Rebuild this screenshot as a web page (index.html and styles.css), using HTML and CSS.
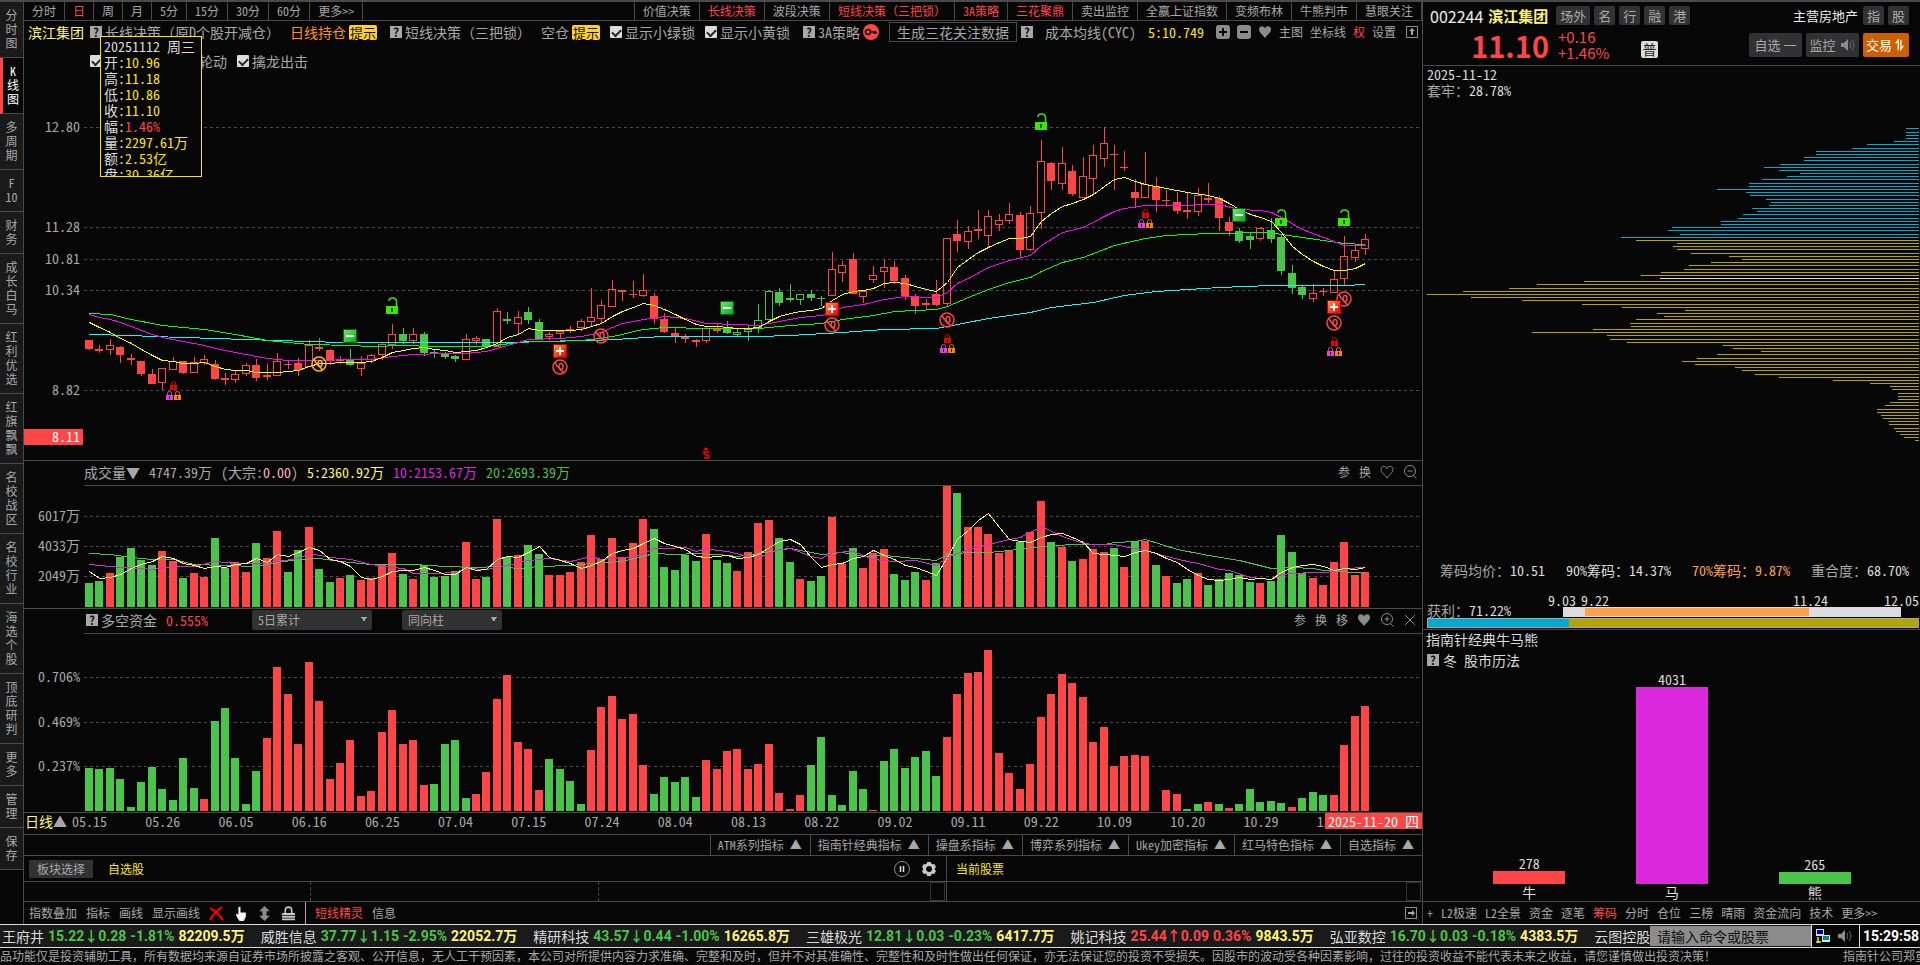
FILE: index.html
```html
<!DOCTYPE html>
<html lang="zh-CN">
<head>
    <meta charset="UTF-8">
    <meta name="viewport" content="width=device-width, initial-scale=1.0">
    <title>滨江集团 002244</title>
    <link rel="stylesheet" href="styles.css">
</head>
<body>
    <!-- Shared icons -->
    <svg class="sprite" aria-hidden="true">
        <symbol id="heart" viewBox="0 0 14 14"><path d="M7 13 C5 10 1 7.500 1 4.500 C1 0.500 6 0.500 7 3.500 C8 0.500 13 0.500 13 4.500 C13 7.500 9 10 7 13Z"/></symbol>
        <symbol id="zoom-out" viewBox="0 0 14 14"><g fill="none" stroke="currentColor"><circle cx="7" cy="6" r="5.500"/><path d="M4.500 6h5M10.500 10.500l3 3"/></g></symbol>
        <symbol id="zoom-in" viewBox="0 0 14 14"><g fill="none" stroke="currentColor"><circle cx="7" cy="6" r="5.500"/><path d="M4.500 6h5M7 3.500v5M10.500 10.500l3 3"/></g></symbol>
        <symbol id="cross" viewBox="0 0 14 14"><path d="M2 2l10 10M12 2L2 12" fill="none" stroke="currentColor"/></symbol>
        <symbol id="plus-box" viewBox="0 0 14 14"><rect width="14" height="14" rx="3" fill="#8c8c8c"/><path d="M7 3v8M3 7h8" stroke="#000" stroke-width="2"/></symbol>
        <symbol id="minus-box" viewBox="0 0 14 14"><rect width="14" height="14" rx="3" fill="#8c8c8c"/><path d="M3 7h8" stroke="#000" stroke-width="2"/></symbol>
        <symbol id="arrow-box" viewBox="0 0 12 12"><rect x=".5" y=".5" width="11" height="11" fill="none" stroke="#8c8c8c"/><path d="M6 2L3 5h2v4h2V5h2z" fill="#a8a8a8"/></symbol>
        <symbol id="arrow-box-right" viewBox="0 0 12 12"><rect x=".5" y=".5" width="11" height="11" fill="none" stroke="#8c8c8c"/><path d="M10 6L7 3v2H3v2h4v2z" fill="#a8a8a8"/></symbol>
        <symbol id="speaker" viewBox="0 0 16 14"><path d="M1 5h3l4-4v12L4 9H1z" fill="#8c8c8c"/><path d="M10 4q2 3 0 6M12 2q4 5 0 10" fill="none" stroke="#6a6a6a" stroke-width="1"/></symbol>
    </svg>

    <div class="app">
        <div class="workspace">
            <nav class="sidebar">
                <a href="#">分<br>时<br>图</a>
                <a href="#" class="active">K<br>线<br>图</a>
                <a href="#">多<br>周<br>期</a>
                <a href="#">F<br>10</a>
                <a href="#">财<br>务</a>
                <a href="#">成<br>长<br>白<br>马</a>
                <a href="#">红<br>利<br>优<br>选</a>
                <a href="#">红<br>旗<br>飘<br>飘</a>
                <a href="#">名<br>校<br>战<br>区</a>
                <a href="#">名<br>校<br>行<br>业</a>
                <a href="#">海<br>选<br>个<br>股</a>
                <a href="#">顶<br>底<br>研<br>判</a>
                <a href="#">更<br>多</a>
                <a href="#">管<br>理</a>
                <a href="#">保<br>存</a>
            </nav>

            <main class="main">
                <nav class="tabs">
                    <a href="#">分时</a>
                    <a href="#" class="red">日</a>
                    <a href="#">周</a>
                    <a href="#">月</a>
                    <a href="#">5分</a>
                    <a href="#">15分</a>
                    <a href="#">30分</a>
                    <a href="#">60分</a>
                    <a href="#">更多&gt;&gt;</a>
                    <span class="tabs-space"></span>
                    <a href="#">价值决策</a>
                    <a href="#" class="red">长线决策</a>
                    <a href="#">波段决策</a>
                    <a href="#" class="red full">短线决策（三把锁）</a>
                    <a href="#" class="red">3A策略</a>
                    <a href="#" class="red">三花聚鼎</a>
                    <a href="#">卖出监控</a>
                    <a href="#">全赢上证指数</a>
                    <a href="#">变频布林</a>
                    <a href="#">牛熊判市</a>
                    <a href="#">慧眼关注</a>
                </nav>

                <!-- Strategy bar -->
                <section class="info">
                    <div class="info-row">
                        <span class="name">滨江集团</span>
                        <span class="item"><b class="help">?</b><span class="full">长线决策（原<i class="half">D</i>个股开减仓）</span></span>
                        <span class="item orange">日线持仓<mark>提示</mark></span>
                        <span class="item wide full"><b class="help">?</b>短线决策（三把锁）</span>
                        <span class="item">空仓<mark>提示</mark></span>
                        <label class="item"><input type="checkbox" checked>显示小绿锁</label>
                        <label class="item"><input type="checkbox" checked>显示小黄锁</label>
                        <span class="item wide"><b class="help">?</b>3A策略<svg class="key" viewBox="0 0 16 16"><circle cx="8" cy="8" r="8" fill="#ff4646"/><circle cx="5" cy="8" r="2.500" fill="none" stroke="#111" stroke-width="1.500"/><path d="M7.500 8h6M11 8v2M13 8v2" fill="none" stroke="#111" stroke-width="1.500"/></svg></span>
                        <button type="button" class="generate">生成三花关注数据</button>
                        <span class="item cost"><b class="help">?</b><span>成本均线(CYC)</span><span class="bright">5:10.749</span></span>
                        <span class="tools">
                            <svg><use href="#plus-box"/></svg>
                            <svg><use href="#minus-box"/></svg>
                            <svg class="solid"><use href="#heart"/></svg>
                            <a href="#">主图</a>
                            <a href="#">坐标线</a>
                            <a href="#" class="red">权</a>
                            <a href="#">设置</a>
                            <svg class="small"><use href="#arrow-box"/></svg>
                        </span>
                    </div>
                    <div class="info-row second">
                        <label class="item rotation"><input type="checkbox" checked><span>板块轮动</span></label>
                        <label class="item"><input type="checkbox" checked>擒龙出击</label>
                    </div>
                    <div class="tooltip">
                        <p>20251112 周三</p>
                        <p>开:<span class="bright">10.96</span></p>
                        <p>高:<span class="bright">11.18</span></p>
                        <p>低:<span class="bright">10.86</span></p>
                        <p>收:<span class="bright">11.10</span></p>
                        <p>幅:<span class="red">1.46%</span></p>
                        <p>量:<span class="bright">2297.61万</span></p>
                        <p>额:<span class="bright">2.53亿</span></p>
                        <p>盘:<span class="bright">30.36亿</span></p>
                    </div>
                </section>

                <section class="plot price">
                    <svg class="axis" id="priceAxis"></svg>
                    <svg id="pricePlot" viewBox="0 0 1338 384" preserveAspectRatio="none"></svg>
                </section>

                <header class="pane-head">
                    <div class="pane-title">
                        <span>成交量▼</span>
                        <span>4747.39万</span>
                        <span>(大宗:<i class="pink">0.00</i>)</span>
                        <span class="yellow">5:2360.92万</span>
                        <span class="magenta">10:2153.67万</span>
                        <span class="green">20:2693.39万</span>
                        <span class="tools">
                            <a href="#">参</a>
                            <a href="#">换</a>
                            <svg class="hollow"><use href="#heart"/></svg>
                            <svg><use href="#zoom-out"/></svg>
                        </span>
                    </div>
                </header>
                <section class="plot volume">
                    <svg class="axis" id="volumeAxis"></svg>
                    <svg id="volumePlot" viewBox="0 0 1338 122" preserveAspectRatio="none"></svg>
                </section>

                <header class="pane-head">
                    <div class="pane-title">
                        <span class="item"><b class="help">?</b>多空资金</span>
                        <span class="red">0.555%</span>
                        <select class="period" aria-label="周期"><option>5日累计</option></select>
                        <select aria-label="柱形"><option>同向柱</option></select>
                        <span class="tools">
                            <a href="#">参</a>
                            <a href="#">换</a>
                            <a href="#">移</a>
                            <svg class="solid"><use href="#heart"/></svg>
                            <svg><use href="#zoom-in"/></svg>
                            <svg><use href="#cross"/></svg>
                        </span>
                    </div>
                </header>
                <section class="plot fund">
                    <svg class="axis" id="fundAxis"></svg>
                    <svg id="fundPlot" viewBox="0 0 1338 178" preserveAspectRatio="none"></svg>
                </section>

                <div class="dates">
                    <span class="cycle"><b>日线</b>▲</span>
                    <ol>
                        <li>05.15</li><li>05.26</li><li>06.05</li><li>06.16</li><li>06.25</li><li>07.04</li>
                        <li>07.15</li><li>07.24</li><li>08.04</li><li>08.13</li><li>08.22</li><li>09.02</li>
                        <li>09.11</li><li>09.22</li><li>10.09</li><li>10.20</li><li>10.29</li><li>11.07</li>
                    </ol>
                    <span class="today">2025-11-20 四</span>
                </div>

                <nav class="groups">
                    <a href="#">ATM系列指标<i>▲</i></a>
                    <a href="#">指南针经典指标<i>▲</i></a>
                    <a href="#">操盘系指标<i>▲</i></a>
                    <a href="#">博弈系列指标<i>▲</i></a>
                    <a href="#">Ukey加密指标<i>▲</i></a>
                    <a href="#">红马特色指标<i>▲</i></a>
                    <a href="#">自选指标<i>▲</i></a>
                </nav>

                <div class="split picks">
                    <div class="left">
                        <button type="button">板块选择</button>
                        <a href="#" class="bright">自选股</a>
                        <svg class="pause" viewBox="0 0 16 16"><circle cx="8" cy="8" r="7.500" fill="none" stroke="#8c8c8c"/><path d="M6.500 5v6M9.500 5v6" stroke="#ddd" stroke-width="1.500"/></svg>
                        <svg viewBox="0 0 16 16"><circle cx="8" cy="8" r="4.500" fill="none" stroke="#c8c8c8" stroke-width="3"/><path d="M8 1v3M8 12v3M1.900 4.500l2.600 1.500M11.500 10l2.600 1.500M1.900 11.500l2.600-1.500M11.500 6l2.600-1.500" stroke="#c8c8c8" stroke-width="4"/></svg>
                    </div>
                    <div class="right"><a href="#" class="bright">当前股票</a></div>
                </div>
                <div class="split strip">
                    <div class="left"><span></span><span></span><span></span><i></i></div>
                    <div class="right"><i></i></div>
                </div>

                <div class="toolbar">
                    <a href="#">指数叠加</a>
                    <a href="#">指标</a>
                    <a href="#">画线</a>
                    <a href="#">显示画线</a>
                    <svg viewBox="0 0 14 14"><path d="M1 2Q8 6 13 13M12 1Q5 6 1 13" fill="none" stroke="#f00" stroke-width="2"/></svg>
                    <svg viewBox="0 0 14 14"><path d="M5 1h2v5h5v4l-2 4H6L3 9V7l2 1z" fill="#f4f4f4"/></svg>
                    <svg viewBox="0 0 14 14"><path d="M7 0l5 5H9v4h3l-5 5-5-5h3V5H2z" fill="#8c8c8c"/></svg>
                    <svg viewBox="0 0 14 14"><path d="M4 7V4q0-3 3-3t3 3v3" fill="none" stroke="#c8c8c8" stroke-width="1.500"/><path d="M1 7.500h12M1 10h12M1 12.500h12" stroke="#c8c8c8" stroke-width="1.800"/></svg>
                    <span class="bar"></span>
                    <a href="#" class="red">短线精灵</a>
                    <a href="#">信息</a>
                    <svg class="end"><use href="#arrow-box-right"/></svg>
                </div>
            </main>

            <!-- Quote panel -->
            <aside class="quote">
                <header>
                    <div class="quote-row">
                        <span class="code">002244</span>
                        <strong class="stock">滨江集团</strong>
                        <span class="tags"><a href="#">场外</a><a href="#">名</a><a href="#">行</a><a href="#">融</a><a href="#">港</a></span>
                        <span class="sector">主营房地产</span>
                        <span class="tags"><a href="#">指</a><a href="#">股</a></span>
                    </div>
                    <div class="quote-row">
                        <strong class="last">11.10</strong>
                        <span class="change">+0.16<br>+1.46%</span>
                        <span class="badge">普</span>
                        <span class="actions">
                            <button type="button">自选 一</button>
                            <button type="button">监控<svg><use href="#speaker"/></svg></button>
                            <button type="button" class="trade">交易<svg viewBox="0 0 12 14"><path d="M1 5l3-4v12M7 1v11l3-4" fill="none" stroke="#fff" stroke-width="1.500"/></svg></button>
                        </span>
                    </div>
                </header>

                <div class="chips">
                    <p class="white">2025-11-12</p>
                    <p>套牢：<span class="white">28.78%</span></p>
                    <svg id="chipPlot" viewBox="0 0 492 458" preserveAspectRatio="none"></svg>
                </div>
                <div class="stats">
                    <span>筹码均价：<span class="white">10.51</span></span>
                    <span class="white">90%筹码：14.37%</span>
                    <span class="peach">70%筹码：9.87%</span>
                    <span>重合度：<span class="white">68.70%</span></span>
                </div>
                <div class="range">
                    <p>获利：<span class="white">71.22%</span></p>
                    <div class="scale">
                        <div class="ticks"><span>9.03</span><span>9.22</span><span class="high">11.24</span><span>12.05</span></div>
                        <div class="outer"><div class="inner"></div></div>
                    </div>
                </div>
                <div class="profit"><div style="width: 28.78%"></div></div>

                <section class="breadth">
                    <h2>指南针经典牛马熊</h2>
                    <p><b class="help">?</b>冬 股市历法</p>
                    <div class="columns" id="breadth"></div>
                </section>

                <nav class="quote-tabs">
                    <span>+</span>
                    <a href="#">L2极速</a>
                    <a href="#">L2全景</a>
                    <a href="#">资金</a>
                    <a href="#">逐笔</a>
                    <a href="#" class="red">筹码</a>
                    <a href="#">分时</a>
                    <a href="#">仓位</a>
                    <a href="#">三榜</a>
                    <a href="#">晴雨</a>
                    <a href="#">资金流向</a>
                    <a href="#">技术</a>
                    <a href="#">更多&gt;&gt;</a>
                </nav>
            </aside>
        </div>

        <footer class="ticker">
            <div class="quotes" id="ticker"></div>
            <input type="text" placeholder="请输入命令或股票" aria-label="请输入命令或股票">
            <div class="tray">
                <svg viewBox="0 0 16 16"><rect x="1" y="1" width="8" height="7" fill="#ddd"/><rect x="2" y="2" width="6" height="4" fill="#00a"/><rect x="7" y="7" width="8" height="7" fill="#ddd"/><rect x="8" y="8" width="6" height="4" fill="#088"/><path d="M1 14h5M3 9v6" stroke="#ee0" stroke-width="1.500"/></svg>
                <svg><use href="#speaker"/></svg>
            </div>
            <time>15:29:58</time>
        </footer>
        <div class="notice full">
            <p>品功能仅是投资辅助工具，所有数据均来源自证券市场所披露之客观、公开信息，无人工干预因素，本公司对所提供内容力求准确、完整和及时，但并不对其准确性、完整性和及时性做出任何保证，亦无法保证您的投资不受损失。因股市的波动受各种因素影响，过往的投资收益不能代表未来之收益，请您谨慎做出投资决策！</p>
            <p>指南针公司郑重</p>
        </div>
    </div>

    <script src="script.js"></script>
</body>
</html>
```
FILE: styles.css
```css
/* Basic Reset */
* {
    margin: 0;
    padding: 0;
    box-sizing: border-box;
}

body {
    background-color: #070707;
    color: #a8a8a8;
    font-family: "Noto Sans CJK SC", sans-serif;
    font-feature-settings: "hwid";
    font-size: 14px;
    line-height: 16px;
    white-space: nowrap;
}

a {
    color: inherit;
    text-decoration: none;
}

i {
    font-style: normal;
}

button,
select,
input {
    font: inherit;
    font-feature-settings: inherit;
    color: inherit;
    border: none;
}

.sprite {
    display: none;
}

/* Full-width punctuation, half-width letters */
.full {
    font-feature-settings: normal;
}

.half {
    font-feature-settings: "hwid";
}

/* Colours */
.red { color: #ff4646; }
.green { color: #4bc44b; }
.yellow { color: #fff573; }
.bright { color: #ffe600; }
.orange { color: #ff9600; }
.peach { color: #ffa04b; }
.magenta { color: #dc28dc; }
.pink { color: #ffb4c8; }
.white { color: #dcdcdc; }

/* Frame */
.app {
    display: flex;
    flex-direction: column;
    height: 100vh;
    overflow: hidden;
    border-top: 2px solid #4a4a4a;
}

.workspace {
    flex: 1;
    min-height: 0;
    display: grid;
    grid-template-columns: 24px minmax(0, 1fr) 498px;
}

/* Sidebar */
.sidebar {
    border-right: 1px solid #4a4a4a;
    font-size: 12px;
    line-height: 14px;
    text-align: center;
}

.sidebar a {
    display: block;
    padding: 6px 0 7px;
    background-color: #1a1a1a;
    border-bottom: 1px solid #4a4a4a;
}

.sidebar .active {
    background-color: #070707;
    color: #fff;
    border-left: 3px solid #ff4646;
}

/* Main column */
.main {
    display: flex;
    flex-direction: column;
    min-width: 0;
    min-height: 0;
}

.tabs {
    display: flex;
    height: 19px;
    border-bottom: 1px solid #4a4a4a;
    font-size: 12px;
    line-height: 18px;
}

.tabs a {
    padding: 0 8px;
    border-right: 1px solid #4a4a4a;
}

.tabs-space {
    flex: 1;
    border-right: 1px solid #4a4a4a;
}

.info {
    position: relative;
    height: 55px;
}

.info-row {
    display: flex;
    align-items: center;
    gap: 10px;
    height: 22px;
    padding: 0 4px;
}

.info-row.second {
    height: 36px;
    padding-left: 66px;
}

.name {
    color: #fff573;
    margin-right: -4px;
}

.item {
    display: flex;
    align-items: center;
    gap: 3px;
}

.item.wide {
    margin-left: 3px;
}

.item mark {
    padding: 0 1px;
    border-radius: 2px;
    background-color: #ffd21e;
    color: #111;
    font-size: 13px;
    line-height: 15px;
}

.rotation span {
    width: 122px;
    text-align: right;
}

.help {
    width: 12px;
    height: 12px;
    background-color: #a8a8a8;
    color: #111;
    font-size: 12px;
    line-height: 12px;
    text-align: center;
}

input[type="checkbox"] {
    appearance: none;
    width: 12px;
    height: 12px;
    background-color: #dcdcdc;
    border-radius: 1px;
}

input[type="checkbox"]:checked::before {
    content: "";
    display: block;
    width: 7px;
    height: 4px;
    margin: 3px 2px;
    border-left: 2px solid #222;
    border-bottom: 2px solid #222;
    transform: rotate(-45deg);
}

.key {
    width: 16px;
    height: 16px;
}

.generate {
    height: 20px;
    padding: 0 7px;
    background-color: #070707;
    border: 1px solid #4a4a4a;
    line-height: 16px;
}

.cost {
    gap: 12px;
    margin-left: -6px;
}

.tools {
    display: flex;
    align-items: center;
    gap: 9px;
    margin-left: auto;
    font-size: 12px;
}

.info-row .tools {
    gap: 7px;
}

.tools svg {
    width: 14px;
    height: 14px;
    color: #8c8c8c;
}

.tools .small {
    width: 12px;
    height: 12px;
    margin-left: 3px;
}

.solid {
    fill: #8c8c8c;
}

.hollow {
    fill: none;
    stroke: #8c8c8c;
}

/* Day tooltip */
.tooltip {
    position: absolute;
    top: 15px;
    left: 76px;
    z-index: 1;
    width: 102px;
    height: 141px;
    overflow: hidden;
    padding: 1px 3px;
    background-color: #070707;
    border: 1px solid #ffe600;
    color: #dcdcdc;
}

/* Plots */
.plot {
    display: grid;
    grid-template-columns: 60px minmax(0, 1fr);
    min-height: 0;
}

.plot svg {
    display: block;
    width: 100%;
    height: 100%;
    min-height: 0;
}

.price { flex: 384 1 0; }
.volume { flex: 122 1 0; }
.fund { flex: 178 1 0; }

.axis text {
    fill: #a8a8a8;
    text-anchor: end;
}

.axis .current {
    fill: #fff;
}

.grid-line {
    stroke: #4a4a4a;
    stroke-dasharray: 3 3;
}

.curve {
    fill: none;
    stroke-width: 1;
}

.pane-head {
    height: 26px;
    padding-left: 60px;
    border-top: 1px solid #4a4a4a;
}

.pane-title {
    display: flex;
    align-items: center;
    gap: 9px;
    height: 25px;
    padding: 0 5px 2px 0;
    border-bottom: 1px solid #4a4a4a;
}

.pane-title .item {
    padding-left: 2px;
}

select {
    appearance: none;
    width: 100px;
    height: 20px;
    margin-left: 21px;
    padding: 0 6px;
    border-radius: 2px;
    background-color: #323234;
    background-image: linear-gradient(to bottom right, #a8a8a8 50%, transparent 50%), linear-gradient(to bottom left, #a8a8a8 50%, transparent 50%);
    background-size: 3px 5px;
    background-position: right 5px top 7px, right 8px top 7px;
    background-repeat: no-repeat;
    font-size: 12px;
}

select.period {
    width: 120px;
    margin-left: 35px;
}

/* Date axis */
.dates {
    position: relative;
    display: flex;
    align-items: flex-start;
    height: 22px;
    padding-right: 32px;
    border-top: 1px solid #4a4a4a;
}

.cycle {
    width: 48px;
    padding-left: 1px;
}

.cycle b {
    color: #fff573;
    font-weight: normal;
}

.dates ol {
    flex: 1;
    display: flex;
    list-style: none;
}

.dates li {
    flex: 1;
}

.today {
    position: absolute;
    top: 0;
    right: 0;
    padding: 0 3px;
    background-color: #ff4646;
    color: #fff;
}

.groups {
    display: flex;
    justify-content: flex-end;
    height: 21px;
    border-top: 1px solid #4a4a4a;
    font-size: 12px;
    line-height: 20px;
}

.groups a {
    padding: 0 8px 0 7px;
    border-left: 1px solid #4a4a4a;
}

.groups i {
    margin-left: 6px;
}

/* Watch list strips */
.split {
    display: grid;
    grid-template-columns: 923px minmax(0, 1fr);
    border-top: 1px solid #4a4a4a;
    font-size: 12px;
}

.split > div {
    display: flex;
    align-items: center;
}

.split .left {
    border-right: 1px solid #4a4a4a;
}

.picks {
    height: 26px;
}

.picks .left {
    gap: 11px;
    padding: 0 9px 0 5px;
}

.picks .right {
    padding-left: 9px;
}

.picks button {
    height: 18px;
    padding: 0 8px;
    margin-right: 4px;
    background-color: #323234;
    line-height: 18px;
}

.picks svg {
    width: 16px;
    height: 16px;
}

.pause {
    margin-left: auto;
}

.strip {
    height: 20px;
}

.strip > div {
    align-items: stretch;
}

.strip span {
    flex: 287;
    border-right: 1px dashed #4a4a4a;
}

.strip span:nth-child(3) {
    flex: 332;
    border-right: none;
}

.strip i {
    width: 15px;
    margin: 0 1px 0 auto;
    border: 1px solid #333;
}

.toolbar {
    display: flex;
    align-items: center;
    gap: 9px;
    height: 23px;
    padding: 0 5px;
    border-top: 1px solid #4a4a4a;
    font-size: 12px;
}

.toolbar svg {
    width: 15px;
    height: 15px;
}

.toolbar .bar {
    align-self: stretch;
    width: 1px;
    background-color: #a8a8a8;
}

.toolbar .end {
    width: 12px;
    height: 12px;
    margin-left: auto;
}

/* Quote panel */
.quote {
    display: flex;
    flex-direction: column;
    min-height: 0;
    border-left: 1px solid #4a4a4a;
}

.quote header {
    height: 64px;
    border-bottom: 1px solid #4a4a4a;
    font-feature-settings: normal;
}

.quote-row {
    display: flex;
    align-items: center;
    height: 27px;
    padding: 0 11px 0 7px;
}

.quote-row + .quote-row {
    height: 32px;
}

.code {
    color: #eee;
    font-size: 16px;
}

.stock {
    margin: 0 8px 0 5px;
    color: #fff573;
    font-size: 15px;
}

.tags {
    display: flex;
    gap: 4px;
    font-size: 13px;
    line-height: 19px;
}

.tags a {
    padding: 0 4px;
    border-radius: 2px;
    background-color: #323234;
}

.sector {
    margin: 0 5px 0 auto;
    color: #eee;
    font-size: 13px;
}

.last {
    width: 119px;
    color: #ff4646;
    font-size: 29px;
    line-height: 32px;
    text-align: right;
}

.change {
    width: 83px;
    margin-left: 9px;
    color: #ff4646;
    font-size: 15px;
}

.badge {
    width: 17px;
    margin-top: 8px;
    border-radius: 2px;
    background-color: #dcdcdc;
    color: #321e14;
    line-height: 17px;
    text-align: center;
}

.actions {
    display: flex;
    gap: 4px;
    margin-left: auto;
}

.actions button {
    display: flex;
    align-items: center;
    justify-content: center;
    gap: 4px;
    width: 53px;
    height: 24px;
    border-radius: 2px;
    background-color: #323234;
    font-size: 13px;
}

.actions svg {
    width: 16px;
    height: 14px;
}

.actions .trade {
    gap: 2px;
    width: 46px;
    background-color: #cd5f00;
    color: #fff;
}

.actions .trade svg {
    width: 12px;
    height: 12px;
}

.chips {
    flex: 1;
    min-height: 0;
    display: flex;
    flex-direction: column;
    padding: 0 1px 0 4px;
}

.chips svg {
    flex: 1;
    min-height: 0;
    width: 100%;
}

.stats {
    display: flex;
    justify-content: space-between;
    padding: 6px 11px 8px 17px;
}

.range {
    display: flex;
    align-items: flex-end;
    height: 32px;
    padding: 0 1px 0 4px;
}

.scale {
    flex: 1;
    margin-left: 37px;
    padding-bottom: 1px;
}

.ticks {
    display: flex;
    gap: 5px;
    color: #dcdcdc;
    line-height: 14px;
}

.ticks .high {
    margin: 0 51px 0 auto;
}

.outer {
    margin: 0 18px 0 15px;
    padding: 1px 92px 1px 22px;
    background-color: #dcdce0;
}

.inner {
    height: 8px;
    background-color: #ffa04b;
}

.profit {
    height: 10px;
    margin: 0 1px 1px 4px;
    border: 1px solid #a8a8a8;
    background-color: #b4a500;
}

.profit div {
    height: 100%;
    background-color: #00aad2;
}

/* Market breadth */
.breadth {
    height: 272px;
    padding: 0 4px 0 3px;
    border-top: 1px solid #4a4a4a;
    color: #dcdcdc;
}

.breadth h2 {
    font-size: 14px;
    font-weight: normal;
    line-height: 18px;
}

.breadth > p {
    display: flex;
    align-items: center;
    gap: 4px;
    height: 23px;
    padding-left: 1px;
}

.columns {
    display: grid;
    grid-template-columns: repeat(3, 1fr);
    align-items: end;
    padding: 0 30px 0 32px;
    line-height: 16px;
    text-align: center;
}

.columns .block {
    width: 72px;
    margin: 0 auto;
}

.quote-tabs {
    display: flex;
    align-items: center;
    gap: 8px;
    height: 23px;
    padding-left: 4px;
    border-top: 1px solid #4a4a4a;
    font-size: 12px;
}

/* Ticker */
.ticker {
    display: flex;
    align-items: center;
    height: 23px;
    border-top: 1px solid #dcdcdc;
    background-color: #1a1a1a;
}

.quotes {
    flex: 1;
    min-width: 0;
    display: flex;
    gap: 16px;
    padding-left: 2px;
    overflow: hidden;
    line-height: 22px;
}

.quotes span {
    display: flex;
    gap: 4px;
    color: #dcdcdc;
}

.quotes b {
    font-family: Roboto, "Noto Sans CJK SC", sans-serif;
    font-feature-settings: normal;
}

.quotes .turnover {
    color: #fff573;
}

.ticker input {
    width: 161px;
    height: 20px;
    padding: 0 7px;
    background-color: #8c8c8c;
}

.ticker input::placeholder {
    color: #111;
    opacity: 1;
}

.tray,
.ticker time {
    display: flex;
    align-items: center;
    align-self: stretch;
    background-color: #070707;
    border-left: 1px solid #dcdcdc;
}

.tray {
    gap: 6px;
    width: 48px;
    padding: 0 3px;
}

.tray svg {
    width: 16px;
    height: 16px;
}

.ticker time {
    width: 61px;
    padding-left: 3px;
    color: #fff;
    font-family: Roboto, sans-serif;
    font-weight: bold;
}

.notice {
    display: flex;
    justify-content: space-between;
    height: 18px;
    overflow: hidden;
    border-top: 1px solid #dcdcdc;
    font-size: 12px;
}

.notice p:last-child {
    width: 77px;
    overflow: hidden;
}
```
FILE: script.js
```js
const RED = '#ff4646';
const GREEN = '#4bc44b';
const STEP = 1276 / 122;
const centre = i => Math.round(5 + i * STEP);

// [body top, body bottom, high, low, kind] - R/g solid, r/G hollow
const candles = `264,273,264,274,R 273,275,269,277,R 269,274,263,279,r 271,279,270,287,R 282,284,278,289,R
285,298,285,300,R 298,308,293,308,R 292,307,292,314,r 285,294,281,294,r 285,297,285,298,R
286,297,281,297,r 283,287,279,289,r 288,303,284,304,R 302,304,297,309,R 298,304,295,307,r
289,298,287,300,r 289,302,283,305,R 299,301,288,304,R 285,300,277,300,r 288,289,285,293,R
287,294,282,300,R 269,291,264,291,r 271,273,262,275,R 274,284,273,289,R 283,285,280,288,R
283,289,273,290,g 287,293,280,300,r 279,284,278,287,r 268,279,267,284,r 258,269,248,273,r
258,265,252,268,g 258,265,252,268,r 258,277,256,280,g 276,278,273,282,g 278,281,276,283,g
280,283,279,286,g 263,284,258,284,r 262,265,260,269,r 263,270,263,270,g 235,271,232,271,r
243,245,236,248,g 241,248,235,259,r 236,244,231,248,g 246,263,243,264,g 258,261,256,264,r
255,258,254,262,r 253,255,250,257,R 245,252,243,255,r 241,246,212,251,r 229,243,224,247,r
213,231,204,231,r 214,216,214,225,R 218,219,205,222,R 214,220,198,221,r 220,243,217,248,R
243,256,237,257,R 257,260,252,267,R 261,263,258,267,R 264,266,263,271,R 252,265,250,267,r
253,255,247,257,R 252,257,245,258,g 256,259,252,261,G 253,256,250,265,G 244,252,228,257,G
215,244,214,245,G 216,227,212,230,g 222,224,208,226,g 218,224,218,229,G 218,222,214,225,g
222,223,220,230,g 193,220,176,220,r 189,197,185,206,r 183,218,177,218,R 215,221,214,227,r
199,204,190,207,r 191,196,183,212,r 191,205,185,208,R 202,220,199,224,R 220,230,218,238,R
227,229,223,233,R 218,229,204,230,R 162,228,162,231,r 158,165,144,176,R 155,166,150,173,r
153,155,134,163,R 140,160,134,171,r 144,149,138,155,r 138,145,127,148,r 139,174,136,181,R
137,174,130,175,r 85,137,64,153,r 87,105,86,114,R 87,108,71,114,r 95,118,89,120,R
100,122,81,122,r 79,103,69,118,r 67,83,51,91,r 78,79,69,114,R 91,92,75,95,R
116,122,103,132,R 108,122,76,122,r 110,124,101,136,R 124,125,114,131,R 126,135,116,138,R
134,136,117,143,R 119,136,112,140,r 122,124,107,127,R 122,142,120,155,R 146,155,141,160,R
155,165,152,167,g 160,164,157,173,g 152,163,151,165,r 154,163,142,167,g 161,195,158,199,g
197,212,189,218,g 211,219,210,223,g 217,223,208,226,r 215,216,212,220,R 203,217,195,217,r
180,203,160,209,r 174,182,169,186,r 163,173,158,179,r`.split(/\s+/).map(s => s.split(','));

// Average lines as "bar:y" pairs
const priceLines = {
    '#00ffff': '0:258 4:259 6:260 12:262 18:264 24:266 40:266 43:265 48:264 50:263 52:262 53:261 55:260 64:260 67:259 72:256 76:253 81:252 83:248 86:242 90:236 92:231 96:226 99:219 102:215 108:211 113:209 120:209 122:208',
    '#00ff00': '0:237 2:238 4:243 7:249 11:253 14:258 17:264 21:268 25:269 27:270 30:269 33:270 38:270 41:266 43:265 47:264 49:262 51:258 52:255 53:253 55:251 59:252 64:252 67:249 70:247 72:243 75:239 77:235 81:233 82:230 84:221 86:213 88:206 90:201 91:195 93:186 95:181 98:169 101:162 103:159 107:157 113:156 114:158 116:161 120:167 122:168',
    '#ff00ff': '0:238 1:241 2:243 3:246 4:250 5:254 6:258 7:261 9:265 11:269 12:272 14:276 16:280 17:282 19:284 22:284 25:283 27:283 29:280 31:278 34:277 36:277 38:275 40:269 41:266 42:263 45:262 47:260 49:256 50:251 51:247 52:245 53:243 55:240 57:242 59:247 62:248 64:249 66:245 68:241 70:239 71:235 72:231 74:228 76:223 78:220 80:221 81:221 82:216 83:207 84:202 86:191 88:184 90:179 91:169 93:156 95:151 97:140 98:135 99:132 101:129 103:129 108:128 110:133 112:134 113:136 114:141 116:153 118:161 120:169 122:169',
    '#ffff00': '0:246 1:251 2:256 3:262 4:267 5:273 6:279 7:284 8:285 9:287 10:287 11:286 12:290 13:293 14:294 15:294 16:296 17:296 18:296 19:295 20:294 21:290 22:287 23:287 24:286 26:286 27:285 28:281 29:276 30:274 31:272 32:271 33:273 34:274 35:276 36:275 37:274 38:271 39:267 40:261 41:258 42:252 43:254 44:254 46:254 47:253 48:250 49:247 50:240 51:235 52:231 53:227 54:229 55:233 56:238 57:243 58:248 59:250 60:250 62:252 63:252 64:251 65:245 66:240 67:237 68:235 69:234 70:232 71:224 72:218 73:215 74:214 75:212 76:207 77:206 78:207 79:210 80:213 81:215 82:206 83:191 84:183 85:176 86:171 87:166 88:162 89:162 90:160 91:145 92:137 93:130 94:127 95:123 96:118 97:110 98:103 99:101 100:105 101:108 103:112 105:116 107:119 108:122 109:127 110:133 111:138 112:141 113:145 114:156 115:170 116:178 117:185 118:190 119:194 120:194 121:192 122:187'
};

const volumes = [24,26,34,50,59,47,42,56,46,29,34,30,69,39,45,35,64,49,76,35,57,80,38,25,29,32,27,29,42,54,33,28,42,30,31,36,65,28,30,88,
    50,52,62,53,32,32,35,45,72,48,69,50,64,88,78,40,37,52,46,73,47,44,36,55,84,87,69,45,28,26,31,90,43,59,39,54,58,33,27,35,27,44,
    121,114,80,80,73,54,56,65,75,106,65,60,46,48,58,55,59,40,66,66,42,31,24,28,34,22,28,34,32,25,24,26,72,55,34,29,22,45,65,32,35];
const volumeKinds = 'ggrggggrrgrrggrrgrrggrggrgrrrrgrggggrrgrgrggrrrrrrrrrrgggggrg' +
    'grrrrggrggrrgrrrgggrgrgrrrrrgrrgrgrrrgrgrgrggrgggggrggggrrrrrr';
const volumeLines = {
    '#4bc44b': '0:67 2:68 4:71 6:73 8:73 10:78 13:79 16:80 18:76 20:73 22:72 24:75 27:78 31:78 34:80 37:81 39:80 41:82 43:80 46:79 49:76 51:75 54:67 56:68 58:67 60:68 62:70 64:67 67:62 70:68 72:66 74:70 76:69 79:72 81:74 82:68 84:66 86:66 88:64 91:60 94:58 97:58 98:56 100:55 101:53 104:63 107:69 110:74 113:82 115:81 117:82 118:84 121:86 122:87',
    '#dc28dc': '0:78 2:80 3:81 5:82 6:83 8:80 10:80 12:75 14:77 16:77 18:75 20:72 21:67 23:71 25:73 27:78 29:81 30:82 31:87 33:87 35:86 36:82 38:83 40:79 42:74 44:72 46:75 48:70 49:73 51:71 52:71 54:62 55:62 57:61 58:65 59:62 60:64 61:65 63:70 64:71 66:63 67:62 69:70 70:72 71:66 73:65 75:73 77:75 79:74 81:79 82:71 84:63 86:58 88:53 89:51 91:40 93:50 95:57 96:58 98:58 99:60 101:64 103:70 105:75 106:77 108:83 109:84 111:91 113:93 114:88 115:87 117:86 118:86 119:85 120:82 122:81',
    '#fff573': '0:85 1:92 2:91 3:88 4:82 5:78 6:75 7:70 8:72 9:77 10:79 11:82 12:80 13:81 14:78 15:77 16:72 17:76 18:68 19:70 20:66 21:61 22:64 23:73 24:75 25:80 26:91 27:93 28:90 29:85 30:84 31:84 32:81 33:84 34:88 35:88 36:81 37:84 38:83 39:73 40:70 41:71 42:66 43:60 44:71 45:74 46:77 47:82 48:79 49:75 50:67 51:64 52:62 53:57 54:52 55:57 56:60 57:63 58:70 59:71 60:70 61:69 62:72 63:71 64:68 65:61 66:55 67:53 68:58 69:71 70:81 71:78 72:77 73:72 74:70 75:64 76:69 77:73 78:79 79:81 80:85 81:89 82:71 83:53 84:44 85:34 86:27 87:41 88:53 89:55 90:56 91:51 92:48 93:47 94:51 95:56 96:67 97:68 98:69 99:70 100:66 101:64 102:67 103:72 104:76 105:83 106:89 107:93 108:94 109:93 110:91 111:93 112:92 113:93 114:86 115:81 116:79 117:78 118:80 119:84 120:82 121:83 122:81'
};

// Net flow, negative values are green columns
const funds = [-43,-42,-43,-32,-4,-29,-44,-22,-11,-53,-23,12,-90,-103,-53,-7,-40,73,144,117,67,149,110,32,48,71,15,20,79,101,67,71,26,-27,-67,-71,-13,
    17,39,112,136,69,62,21,-52,-42,-30,-7,61,104,115,92,97,46,-17,-34,-29,-34,-14,51,42,60,62,42,47,67,18,2,16,-46,-74,-16,-6,-40,-22,1,
    -50,-62,-43,-54,-60,-35,74,117,138,139,161,58,38,22,47,94,117,137,128,114,69,84,45,55,56,55,0,21,17,-2,-7,9,-7,3,-7,-22,-9,-10,-8,4,
    -13,-19,-16,16,66,95,105];

const chips = [13,13,13,13,25,52,67,103,103,115,115,139,155,140,119,132,157,170,170,202,173,169,153,148,150,167,162,176,181,198,198,247,251,239,298,
    283,242,246,242,228,190,177,208,230,235,258,278,259,335,382,410,456,492,448,397,337,297,234,262,255,283,289,288,326,387,312,309,292,
    196,186,158,202,222,237,224,184,177,164,140,86,49,29,27,21,21,21,29,34,42,42,38,36,30,30,25,23,19,15,4];

const rect = (x, y, w, h, fill) => `<rect x="${x}" y="${y}" width="${w}" height="${h}" fill="${fill}"/>`;

function gridLines(rows) {
    return rows.map(y => `<path class="grid-line" d="M0 ${y + 0.5}H1335"/>`).join('');
}

function curves(lines) {
    return Object.entries(lines).map(([colour, data]) => {
        const points = data.split(' ').map(p => {
            const [i, y] = p.split(':');
            return `${centre(+i) + 0.5},${+y + 0.5}`;
        }).join(' ');
        return `<polyline class="curve" stroke="${colour}" points="${points}"/>`;
    }).join('');
}

function candle([top, bottom, high, low, kind], i) {
    const x = centre(i);
    const colour = kind.toLowerCase() === 'g' ? GREEN : RED;
    const h = bottom - top;
    if (kind === 'R' || kind === 'g') {
        return rect(x, high, 1, low - high, colour) + rect(x - 4, top, 8, h, colour);
    }
    return rect(x, high, 1, top - high, colour) + rect(x, bottom, 1, low - bottom, colour) +
        `<rect x="${x - 3.5}" y="${+top + 0.5}" width="7" height="${h - 1}" fill="none" stroke="${colour}"/>`;
}

// Markers, drawn around x = 0 from y = 0 down
const lock = (x, y, c) => `<g transform="translate(${x} ${y})"><path d="M-1.500 4V2q0-1.500 2-1.500t2 1.500v2" fill="none" stroke="${c}" stroke-opacity=".8"/>${rect(-3, 4, 7, 5, c)}${rect(0, 5, 1, 3, '#000')}</g>`;
const markers = {
    unlock: () => `<path d="M-3 3q0-3 3.500-3t4 3v6" fill="none" stroke="#3ce600" stroke-width="1.500"/>${rect(-6, 8, 12, 8, '#3ce600')}${rect(-1, 10, 2, 4, '#062')}`,
    minus: () => `<rect x="-6.500" y=".5" width="13" height="13" fill="url(#greenFill)" stroke="#0a6414"/>${rect(-4, 6, 8, 2, '#fff')}`,
    plus: () => `<rect x="-6.500" y=".5" width="13" height="13" fill="url(#redFill)" stroke="#b40000"/>${rect(-4, 6, 8, 2, '#fff')}${rect(-1, 3, 2, 8, '#fff')}`,
    coil: c => `<g fill="none" stroke="${c}" stroke-width="1.500"><circle cy="8" r="7"/><path d="M-5 3C-4 7-1 9 4 14"/><ellipse cx="1" cy="7.500" rx="2" ry="3"/></g>`,
    locks: () => lock(0, 0, '#f00000') + lock(-4, 10, '#f03cdc') + lock(4, 10, '#ff8200')
};
const marks = [
    ['locks', 8, 305], ['coil', 22, 280, '#ffb428'], ['minus', 25, 253], ['unlock', 29, 222],
    ['plus', 45, 268], ['coil', 45, 283, RED], ['coil', 49, 252, RED], ['minus', 61, 225],
    ['plus', 71, 226], ['coil', 71, 241, RED], ['coil', 82, 236, RED], ['locks', 82, 258],
    ['unlock', 91, 38], ['locks', 101, 133], ['minus', 110, 132], ['unlock', 114, 134],
    ['unlock', 120, 134], ['coil', 120, 215, RED], ['plus', 119, 224], ['coil', 119, 239, RED], ['locks', 119, 261]
];

document.getElementById('pricePlot').innerHTML =
    `<defs>
        <linearGradient id="greenFill" x2="1" y2="1"><stop stop-color="#78e678"/><stop offset="1" stop-color="#00aa14"/></linearGradient>
        <linearGradient id="redFill" x2="1" y2="1"><stop stop-color="#ffa050"/><stop offset=".6" stop-color="#fa3214"/><stop offset="1" stop-color="#e60000"/></linearGradient>
    </defs>` +
    `<g shape-rendering="crispEdges">${gridLines([51, 151, 183, 214, 314])}${candles.map(candle).join('')}${curves(priceLines)}</g>` +
    marks.map(([kind, i, y, c]) => `<g transform="translate(${centre(i)} ${y})">${markers[kind](c)}</g>`).join('') +
    '<path d="M622 371l3 3h-6z" fill="#f00"/><path d="M625 376h-5v2l5 2v2h-5" fill="none" stroke="#f00" stroke-width="1.500"/>';

document.getElementById('volumePlot').innerHTML = `<g shape-rendering="crispEdges">${gridLines([30, 60, 90])}` +
    volumes.map((v, i) => rect(centre(i) - 4, 121 - v, 8, v, volumeKinds[i] === 'r' ? RED : GREEN)).join('') +
    curves(volumeLines) + '</g>';

document.getElementById('fundPlot').innerHTML = `<g shape-rendering="crispEdges">${gridLines([43, 88, 132])}` +
    funds.map((v, i) => rect(centre(i) - 4, 177 - Math.abs(v), 8, Math.abs(v), v > 0 ? RED : GREEN)).join('') + '</g>';

document.getElementById('chipPlot').innerHTML = '<g shape-rendering="crispEdges">' + chips.map((w, i) => {
    const colour = i < 35 ? '#00aad2' : i === 47 ? '#dcdcdc' : '#b4a500';
    return rect(492 - w, Math.ceil(30 + i * 3.182), w, 1, colour);
}).join('') + '</g>';

function axis(id, height, labels) {
    document.getElementById(id).innerHTML = labels.map(([text, y, current]) => {
        const pct = y / height * 100;
        return current
            ? `<rect y="${pct}%" width="59" height="16" fill="${RED}"/><text class="current" x="56" y="${pct}%" dy="13">${text}</text>`
            : `<text x="56" y="${pct}%" dy="5">${text}</text>`;
    }).join('');
}
axis('priceAxis', 384, [['12.80', 51], ['11.28', 151], ['10.81', 183], ['10.34', 214], ['8.82', 314], ['8.11', 353, true]]);
axis('volumeAxis', 122, [['6017万', 30], ['4033万', 60], ['2049万', 90]]);
axis('fundAxis', 178, [['0.706%', 43], ['0.469%', 88], ['0.237%', 132]]);

// Bull / horse / bear counts
document.getElementById('breadth').innerHTML = [['牛', 278, 13, RED], ['马', 4031, 197, '#dc28dc'], ['熊', 265, 12, GREEN]]
    .map(([name, count, h, colour]) => `<div>${count}<div class="block" style="height: ${h}px; background-color: ${colour}"></div>${name}</div>`).join('');

// Ticker
document.getElementById('ticker').innerHTML = [
    ['王府井', '15.22', '↓', '0.28', '-1.81%', '82209.5万'],
    ['威胜信息', '37.77', '↓', '1.15', '-2.95%', '22052.7万'],
    ['精研科技', '43.57', '↓', '0.44', '-1.00%', '16265.8万'],
    ['三雄极光', '12.81', '↓', '0.03', '-0.23%', '6417.7万'],
    ['姚记科技', '25.44', '↑', '0.09', '0.36%', '9843.5万'],
    ['弘亚数控', '16.70', '↓', '0.03', '-0.18%', '4383.5万'],
    ['云图控股']
].map(([name, price, arrow, diff, pct, turnover]) => {
    if (!price) return `<span>${name}</span>`;
    const colour = arrow === '↑' ? 'red' : 'green';
    return `<span>${name}<b class="${colour}">${price}${arrow}${diff}</b><b class="${colour}">${pct}</b><b class="turnover">${turnover}</b></span>`;
}).join('');
```
